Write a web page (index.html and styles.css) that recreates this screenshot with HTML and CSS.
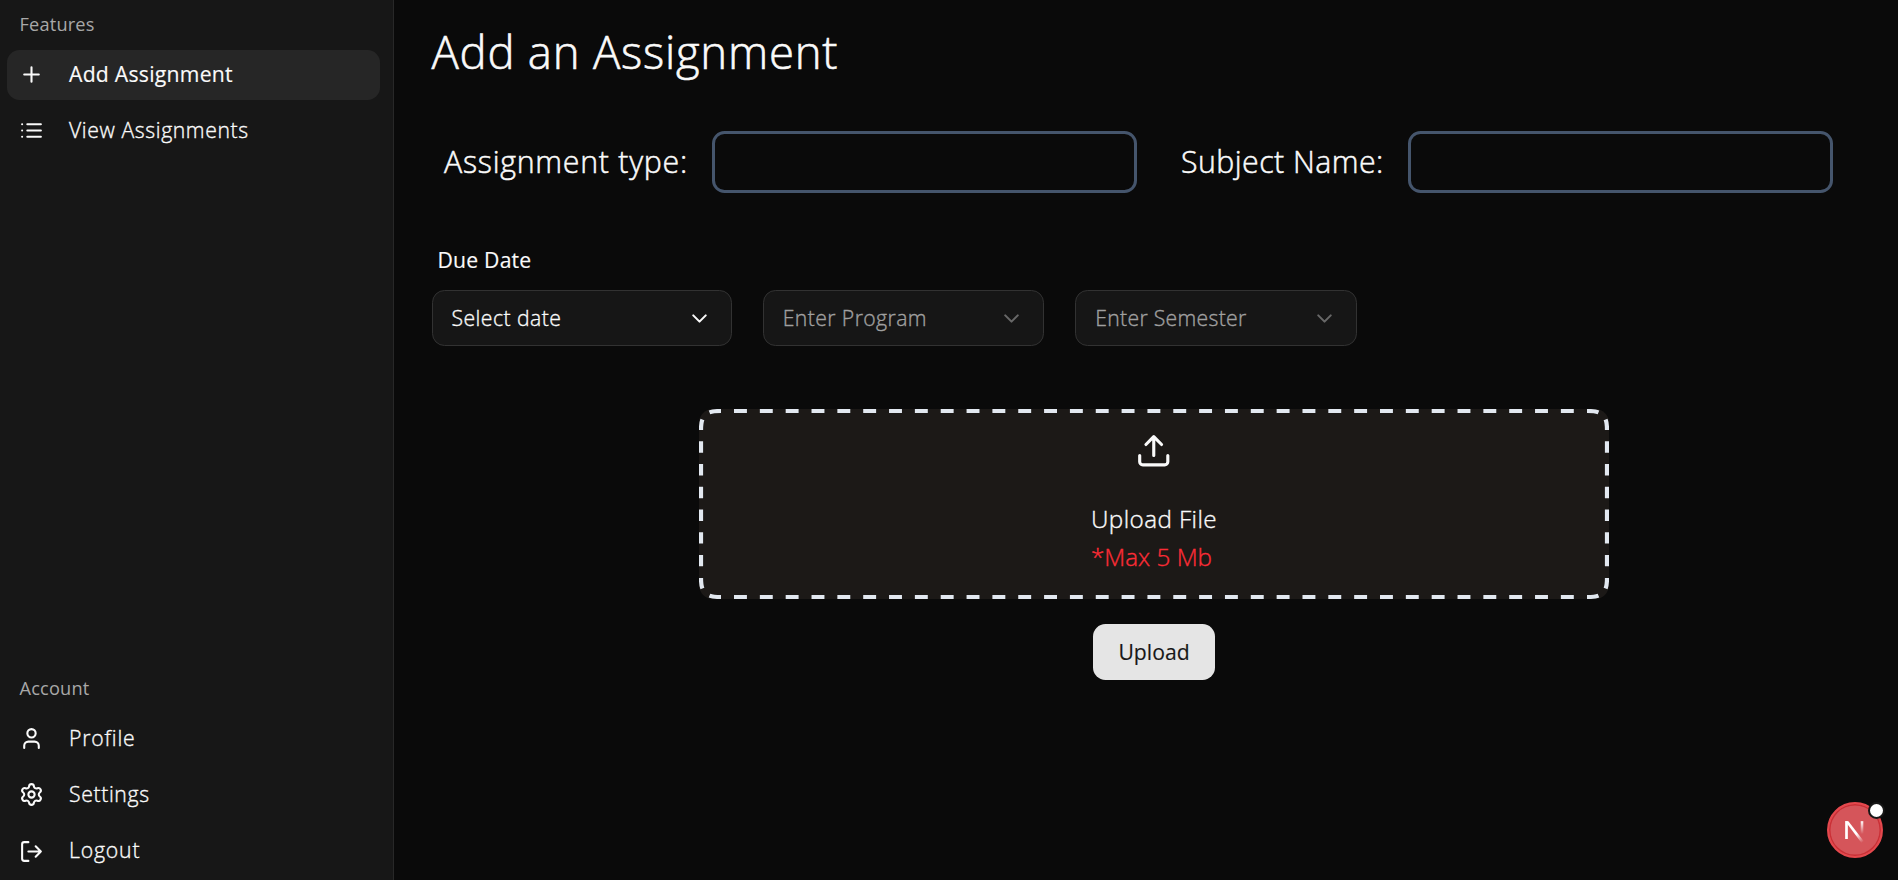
FILE: index.html
```
<!DOCTYPE html>
<html lang="en">
<head>
<meta charset="utf-8">
<title>Add an Assignment</title>
<link rel="stylesheet" href="styles.css">
</head>
<body>
<div class="layout">
  <aside class="sidebar">
    <section class="group">
      <h2 class="group-label">Features</h2>
      <nav class="menu">
        <a class="item item-active">
          <svg class="icon" viewBox="0 0 24 24"><path d="M5 12h14M12 5v14"/></svg>
          <span class="item-text">Add Assignment</span>
        </a>
        <a class="item">
          <svg class="icon" viewBox="0 0 24 24"><path d="M3 6h.01M3 12h.01M3 18h.01M8 6h13M8 12h13M8 18h13"/></svg>
          <span class="item-text view">View Assignments</span>
        </a>
      </nav>
    </section>
    <section class="group">
      <h2 class="group-label">Account</h2>
      <nav class="menu">
        <a class="item">
          <svg class="icon" viewBox="0 0 24 24"><path d="M19 21v-2a4 4 0 0 0-4-4H9a4 4 0 0 0-4 4v2"/><circle cx="12" cy="7" r="4"/></svg>
          <span class="item-text profile">Profile</span>
        </a>
        <a class="item">
          <svg class="icon" viewBox="0 0 24 24"><path d="M9.671 4.136a2.34 2.34 0 0 1 4.659 0 2.34 2.34 0 0 0 3.319 1.915 2.34 2.34 0 0 1 2.33 4.033 2.34 2.34 0 0 0 0 3.831 2.34 2.34 0 0 1-2.33 4.033 2.34 2.34 0 0 0-3.319 1.915 2.34 2.34 0 0 1-4.659 0 2.34 2.34 0 0 0-3.32-1.915 2.34 2.34 0 0 1-2.33-4.033 2.34 2.34 0 0 0 0-3.831A2.34 2.34 0 0 1 6.35 6.051a2.34 2.34 0 0 0 3.319-1.915"/><circle cx="12" cy="12" r="3"/></svg>
          <span class="item-text settings">Settings</span>
        </a>
        <a class="item">
          <svg class="icon" viewBox="0 0 24 24"><path d="M9 21H5a2 2 0 0 1-2-2V5a2 2 0 0 1 2-2h4M16 17l5-5-5-5M21 12H9"/></svg>
          <span class="item-text logout">Logout</span>
        </a>
      </nav>
    </section>
  </aside>
  <main class="main">
    <h1 class="title">Add an Assignment</h1>
    <form class="form">
      <div class="fields">
        <label class="field-label type-label" for="type">Assignment type:</label>
        <input class="field" id="type" type="text">
        <label class="field-label subject-label" for="subject">Subject Name:</label>
        <input class="field" id="subject" type="text">
      </div>
      <div class="due">Due Date</div>
      <div class="selects">
        <button class="select select-date" type="button">
          <span>Select date</span>
          <svg class="icon" viewBox="0 0 24 24"><path d="m6 9 6 6 6-6"/></svg>
        </button>
        <button class="select select-empty program" type="button">
          <span>Enter Program</span>
          <svg class="icon" viewBox="0 0 24 24"><path d="m6 9 6 6 6-6"/></svg>
        </button>
        <button class="select select-empty semester" type="button">
          <span>Enter Semester</span>
          <svg class="icon" viewBox="0 0 24 24"><path d="m6 9 6 6 6-6"/></svg>
        </button>
      </div>
      <div class="upload">
        <div class="dropzone">
          <svg class="dashes" viewBox="0 0 910 190">
            <path class="dash-x" d="M35 2H876M35 188H876"/>
            <path class="dash-y" d="M2 32.3V168M908 32.3V168"/>
            <path d="M10.5 3.4Q14 2 22 2M899.5 3.4Q896 2 888 2M10.5 186.6Q14 188 22 188M899.5 186.6Q896 188 888 188"/>
            <path d="M3.4 10.5Q2 14 2 21M906.6 10.5Q908 14 908 21M3.4 179.5Q2 176 2 169M906.6 179.5Q908 176 908 169"/>
          </svg>
          <svg class="icon icon-upload" viewBox="0 0 24 24"><path d="M12 3v12M17 8l-5-5-5 5M21 15v4a2 2 0 0 1-2 2H5a2 2 0 0 1-2-2v-4"/></svg>
          <div class="drop-text">
            <div class="drop-title">Upload File</div>
            <div class="drop-limit">*Max 5 Mb</div>
          </div>
        </div>
        <button class="submit" type="button">Upload</button>
      </div>
    </form>
  </main>
</div>
<div class="badge">
  <svg class="badge-mark" viewBox="0 0 56 56">
    <defs>
      <linearGradient id="diag" gradientUnits="userSpaceOnUse" x1="29" y1="32" x2="35.5" y2="40.5"><stop offset="0" stop-color="#fff"/><stop offset="1" stop-color="#fff" stop-opacity="0"/></linearGradient>
      <linearGradient id="stem" gradientUnits="userSpaceOnUse" x1="35" y1="19" x2="35" y2="32"><stop offset="0" stop-color="#fff"/><stop offset="1" stop-color="#fff" stop-opacity="0"/></linearGradient>
    </defs>
    <path d="M18.2 19.2h3.2L37 39.6 34.8 41.2Z" fill="url(#diag)"/>
    <path d="M19.5 19.2V37" fill="none" stroke="#fff" stroke-width="2.7"/>
    <path d="M35 19.2V32" fill="none" stroke="url(#stem)" stroke-width="2.6"/>
  </svg>
  <span class="badge-dot"></span>
</div>
</body>
</html>
```
FILE: styles.css
```
* { box-sizing: border-box; }

body {
  margin: 0;
  background: #0a0a0a;
  color: #fafafa;
  font-family: "Open Sans", sans-serif;
  font-weight: 300;
  -webkit-text-stroke: .35px currentColor;
  overflow: hidden;
}

h1, h2 { margin: 0; font-weight: 300; }

button, input { font: inherit; color: inherit; }

.layout { display: flex; height: 880px; }

.icon {
  width: 25px;
  height: 25px;
  flex: none;
  fill: none;
  stroke: currentColor;
  stroke-width: 2;
  stroke-linecap: round;
  stroke-linejoin: round;
}

.sidebar {
  width: 394px;
  flex: none;
  display: flex;
  flex-direction: column;
  justify-content: space-between;
  padding: 0 13.5px 4px 6.5px;
  background: #171717;
  border-right: 1px solid #282828;
}

.group-label {
  height: 49.6px;
  padding-left: 13px;
  font-size: 18.2px;
  line-height: 49px;
  font-weight: 400;
  letter-spacing: .18px;
  color: #a8a8a8;
  -webkit-text-stroke: 0;
}

.menu { display: flex; flex-direction: column; gap: 6.25px; }

.item {
  display: flex;
  align-items: center;
  gap: 25px;
  height: 50px;
  padding-left: 12.5px;
  border-radius: 12.5px;
  font-size: 21.2px;
  line-height: 30px;
}

.item-text { padding-bottom: 1.5px; }
.item-active { background: #262626; font-weight: 400; letter-spacing: .25px; -webkit-text-stroke: .15px currentColor; }
.view { letter-spacing: .6px; }
.profile { letter-spacing: .85px; }
.settings { letter-spacing: .64px; }
.logout { letter-spacing: .85px; }

.main { flex: 1; padding: 20px 38px 0 37.5px; }

.title {
  font-size: 45.5px;
  line-height: 62px;
  letter-spacing: .76px;
  -webkit-text-stroke: .6px currentColor;
}

.fields {
  display: grid;
  grid-template-columns: 268px 425px 271px 425px;
  align-items: center;
  margin: 49px 0 0 12.5px;
  height: 62px;
}

.field-label { font-size: 30.3px; line-height: 42px; -webkit-text-stroke: .5px currentColor; }
.type-label { letter-spacing: .74px; }
.subject-label { padding-left: 44px; letter-spacing: .45px; }

.field {
  width: 425px;
  height: 62px;
  padding: 0 12px;
  background: transparent;
  border: 3px solid #45556c;
  border-radius: 12.5px;
  outline: none;
}

.due {
  margin: 51px 0 15px 6px;
  font-size: 21.2px;
  line-height: 31px;
  font-weight: 400;
  letter-spacing: .2px;
  -webkit-text-stroke: .15px currentColor;
}

.selects { display: flex; gap: 31.25px; }

.select {
  display: flex;
  align-items: center;
  justify-content: space-between;
  width: 281.25px;
  height: 56.25px;
  padding: 0 19px;
  background: #161616;
  border: 1px solid #323232;
  border-radius: 12.5px;
  font-size: 21.2px;
  line-height: 30px;
}

.select span { padding-bottom: 1px; }
.select-date { width: 300px; letter-spacing: .45px; }
.select-empty { color: #a0a0a0; }
.select-empty .icon { color: #686868; }
.program { letter-spacing: .4px; }
.semester { letter-spacing: .3px; }

.upload {
  display: flex;
  flex-direction: column;
  align-items: center;
  gap: 25px;
  width: 910px;
  margin: 62.75px 0 0 267.5px;
}

.dropzone {
  position: relative;
  display: flex;
  flex-direction: column;
  align-items: center;
  justify-content: space-between;
  width: 910px;
  height: 190px;
  padding: 23px 0 24px;
  background: #1c1917;
  border-radius: 14px;
}

.dashes {
  position: absolute;
  inset: 0;
  width: 910px;
  height: 190px;
  fill: none;
  stroke: #e2e8f0;
  stroke-width: 4.2;
}

.dash-x { stroke-dasharray: 12.92 12.92; }
.dash-y { stroke-dasharray: 11.4 11.33; }

.icon-upload { width: 37.5px; height: 37.5px; }

.drop-text { font-size: 24.25px; line-height: 37.5px; }
.drop-title { letter-spacing: .4px; }
.drop-limit { color: #fb2c36; }

.submit {
  width: 122px;
  height: 56px;
  padding: 0 0 2px;
  background: #e5e5e5;
  border: 0;
  border-radius: 12.5px;
  color: #171717;
  font-size: 21.2px;
  font-weight: 400;
  -webkit-text-stroke: .15px currentColor;
}

.badge {
  position: fixed;
  right: 15.5px;
  bottom: 22.5px;
  width: 56px;
  height: 56px;
  border-radius: 50%;
  background: #d5555a;
  border: 2px solid #e5484d;
  box-shadow: inset 0 0 0 1.5px #ca3036;
}

.badge-mark { position: absolute; left: -2px; top: -2px; width: 56px; height: 56px; }

.badge-dot {
  position: absolute;
  left: 39.5px;
  top: -1.5px;
  width: 17px;
  height: 17px;
  border: 2px solid #171717;
  border-radius: 50%;
  background: #fff;
}
```
